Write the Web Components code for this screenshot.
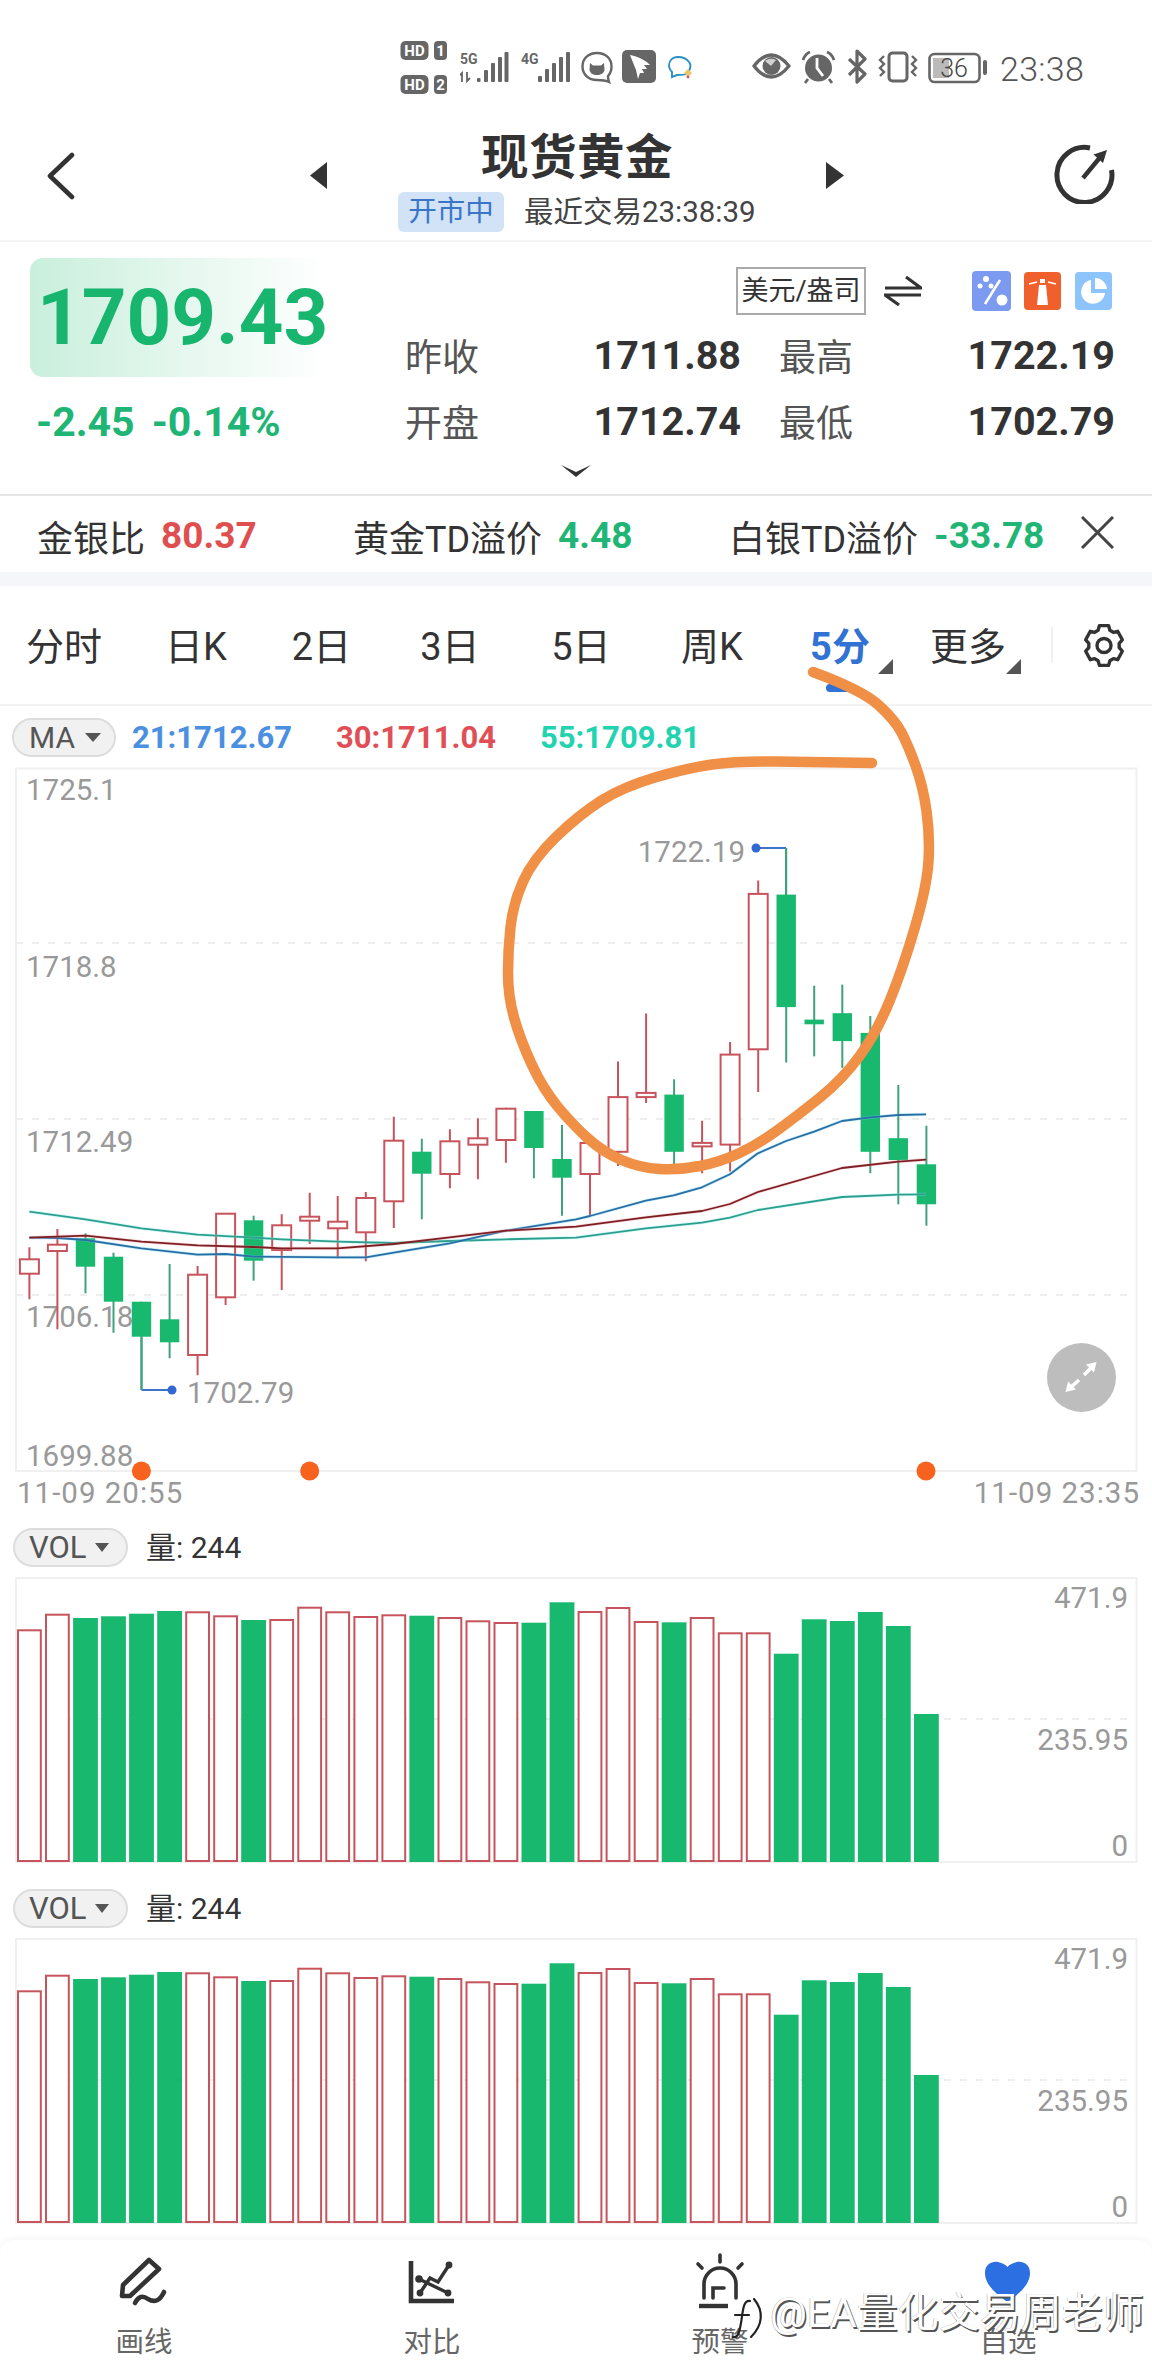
<!DOCTYPE html>
<html lang="zh">
<head>
<meta charset="utf-8">
<title>现货黄金</title>
<style>
html,body{margin:0;padding:0;background:#fff;}
body{width:1152px;height:2376px;position:relative;overflow:hidden;font-family:Roboto,"Noto Sans CJK SC",sans-serif;color:#333;}
</style>
</head>
<body>
<status-bar></status-bar>
<quote-header></quote-header>
<quote-panel></quote-panel>
<ticker-row></ticker-row>
<period-tabs></period-tabs>
<kline-chart></kline-chart>
<vol-chart></vol-chart>
<vol-chart></vol-chart>
<bottom-nav>
  <nav-item label="画线">
    <svg slot="icon" width="80" height="74" viewBox="104 2252 80 74" fill="none" stroke="#333" stroke-width="4.6" stroke-linejoin="round" stroke-linecap="round">
      <path d="M149 2260L159 2269L130 2296L122 2296L123 2285Z"/>
      <path d="M135 2303Q140 2293 148 2299Q158 2305 164 2292"/>
    </svg>
  </nav-item>
  <nav-item label="对比">
    <svg slot="icon" width="80" height="74" viewBox="392 2252 80 74" fill="none" stroke="#333" stroke-width="3.4" stroke-linecap="round">
      <path d="M411 2261V2301H454" stroke-width="4.6" stroke-linecap="butt"/>
      <path d="M420 2293L430 2278L438 2282L449 2265M419 2279L448 2293"/>
      <g fill="#333" stroke="none"><circle cx="420" cy="2293" r="3.4"/><circle cx="449" cy="2265" r="3.4"/><circle cx="419" cy="2279" r="3.8"/><circle cx="448" cy="2293" r="3.4"/></g>
    </svg>
  </nav-item>
  <nav-item label="预警">
    <svg slot="icon" width="80" height="74" viewBox="680 2252 80 74" fill="none" stroke="#333" stroke-width="3.6" stroke-linecap="round">
      <path d="M720 2255V2262M698 2264L702 2268M742 2264L738 2268"/>
      <path d="M704 2298V2284A16 16 0 0 1 736 2284V2298"/>
      <path d="M713 2298V2288H724"/>
      <path d="M699 2306H728" stroke-width="4.4" stroke-linecap="butt"/>
    </svg>
  </nav-item>
  <nav-item label="自选">
    <svg slot="icon" width="80" height="74" viewBox="968 2252 80 74">
      <path fill="#2b6fe3" d="M1007.5 2302C990 2290 985 2281 985 2273C985 2264 992 2261 998 2262C1003 2263 1006 2265 1007.5 2267C1009 2265 1012 2263 1017 2262C1023 2261 1030 2264 1030 2273C1030 2281 1025 2290 1007.5 2302Z"/>
    </svg>
  </nav-item>
</bottom-nav>
<ink-scribble></ink-scribble>

<script>
class StatusBar extends HTMLElement{
    constructor(){
        super();
        this.attachShadow({mode:'open'})
        this.shadowRoot.innerHTML=`
        <style>
        :host{display:flex;height:105px;box-sizing:border-box;padding:40px 0 5px 400px;align-items:center;color:#666;}
        svg{display:block;height:60px;flex:none;}
        text{font-family:Roboto,sans-serif;}
        .time{font-size:34px;font-weight:300;color:#555;margin:-2px 0 0 13px;line-height:60px;letter-spacing:.3px;}
        </style>
        <svg width="47" viewBox="400 40 47 60">
          <g fill="#666"><rect x="400.5" y="41" width="28" height="19" rx="5"/><rect x="434" y="41" width="13" height="19" rx="4"/><rect x="400.5" y="75" width="28" height="19" rx="5"/><rect x="434" y="75" width="13" height="19" rx="4"/></g>
          <g fill="#fff" font-size="15" font-weight="700" text-anchor="middle"><text x="414.5" y="56">HD</text><text x="440.5" y="56">1</text><text x="414.5" y="90">HD</text><text x="440.5" y="90">2</text></g>
        </svg>
        <svg width="50" viewBox="460 40 50 60" style="margin-left:13px">
          <text x="460" y="64" font-size="14" font-weight="700" fill="#666">5G</text>
          <path d="M462 82V73L459 76M467 72V81L470 78" fill="none" stroke="#666" stroke-width="1.8"/>
          <g fill="#666"><rect x="477" y="78" width="3.5" height="4" rx="1"/><rect x="484" y="70" width="4" height="12" rx="1"/><rect x="491" y="63" width="4" height="19" rx="1"/><rect x="498" y="57" width="4" height="25" rx="1"/><rect x="504.5" y="52" width="4" height="30" rx="1"/></g>
        </svg>
        <svg width="49" viewBox="521 40 49 60" style="margin-left:11px">
          <text x="521" y="64" font-size="14" font-weight="700" fill="#666">4G</text>
          <g fill="#666"><rect x="538" y="76" width="4" height="6" rx="1"/><rect x="545" y="69" width="4" height="13" rx="1"/><rect x="552" y="63" width="4" height="19" rx="1"/><rect x="559" y="57" width="4" height="25" rx="1"/><rect x="566" y="52" width="4" height="30" rx="1"/></g>
        </svg>
        <svg width="32" viewBox="581 40 32 60" style="margin-left:11px">
          <path d="M597 53C588 53 582.500 59 582.500 66.500C582.500 74 588 80 597 80C601 80 605 80 609 82C608 79 608 77 608 76C610.500 73.500 611.500 70 611.500 66.500C611.500 59 606 53 597 53Z" fill="none" stroke="#666" stroke-width="2.4"/>
          <path d="M590 63L593 65.500H601L604 63L604.500 70C604 73 601 75 597 75C593 75 590 73 589.500 70Z" fill="#666"/>
        </svg>
        <svg width="34" viewBox="622 40 34 60" style="margin-left:9px">
          <rect x="622" y="50" width="34" height="33" rx="5" fill="#666"/>
          <path d="M630 55C636 56 646 60 650 65L644 65L647 69L642 69L644 73L640 73L638 79L636 70C634 65 632 60 630 55Z" fill="#fff"/>
        </svg>
        <svg width="27" viewBox="668 40 27 60" style="margin-left:12px">
          <path d="M688 72C691 69 691 64 689 62C686 58 682 57 678 57C672 57 669 61 669 66C669 69 671 71 672 72L672 77L677 75C681 75 684 75 686 74" fill="none" stroke="#2a8fc4" stroke-width="1.9"/>
          <path d="M688 69L692 73L688 77L684 73Z" fill="#e9c46a"/><circle cx="688" cy="77" r="1.400" fill="#d9534f"/>
        </svg>
        <svg width="39" viewBox="752 40 39 60" style="margin-left:57px">
          <path d="M754 66Q771 44 789 66Q771 88 754 66Z" fill="none" stroke="#666" stroke-width="3.4" stroke-linejoin="round"/>
          <circle cx="771.500" cy="66" r="9" fill="#666"/><path d="M765 61Q770 57 776 60L771 66Z" fill="#fff" opacity=".7"/>
        </svg>
        <svg width="33" viewBox="802 40 33 60" style="margin-left:11px">
          <circle cx="818.500" cy="68" r="13.500" fill="#666"/>
          <path d="M817 58V68L823 76" fill="none" stroke="#fff" stroke-width="2.800"/>
          <path d="M803 60Q805 54 810 52M834 60Q832 54 827 52M808 79L805 83M829 79L832 83" fill="none" stroke="#666" stroke-width="2.800"/>
        </svg>
        <svg width="20" viewBox="847 40 20 60" style="margin-left:12px">
          <path d="M849 59L865 74L857 82V51L865 59L849 75" fill="none" stroke="#666" stroke-width="3.200" stroke-linejoin="round"/>
        </svg>
        <svg width="40" viewBox="878 40 40 60" style="margin-left:11px">
          <rect x="889" y="53" width="18" height="28" rx="3.500" fill="none" stroke="#666" stroke-width="3"/>
          <path d="M884 56L880 60L884 64L880 68L884 72L880 76M912 56L916 60L912 64L916 68L912 72L916 76" fill="none" stroke="#666" stroke-width="2.400"/>
        </svg>
        <svg width="59" viewBox="928 40 59 60" style="margin-left:10px">
          <rect x="929.500" y="54" width="50" height="28" rx="5" fill="none" stroke="#666" stroke-width="2.600"/>
          <rect x="933" y="58" width="16" height="20" fill="#bbb"/>
          <text x="954" y="77" font-size="25" font-weight="300" fill="#444" text-anchor="middle">36</text>
          <rect x="983" y="60" width="4" height="15" rx="2" fill="#666"/>
        </svg>
        <span class="time">23:38</span>
        `
    }
}
customElements.define('status-bar',StatusBar);

class QuoteHeader extends HTMLElement{
    constructor(){
        super();
        this.attachShadow({mode:'open'})
        this.shadowRoot.innerHTML=`
        <style>
        :host{display:grid;grid-template-columns:310px 534px 1fr;height:137px;box-sizing:border-box;border-bottom:2px solid #f4f4f4;}
        .back{padding:47px 0 0 44px;}
        .mid{display:flex;justify-content:space-between;align-items:flex-start;}
        .tri{margin-top:57px;display:block;}
        .center{display:flex;flex-direction:column;align-items:center;}
        h1{margin:23px 0 0;font-size:47.500px;line-height:60px;font-weight:700;color:#333;letter-spacing:.5px;}
        .sub{display:flex;align-items:center;gap:20px;margin-top:4px;}
        .tag{background:#d2e2f7;color:#3a76c6;font-size:28.500px;line-height:40px;padding:0 10px;border-radius:6px;white-space:nowrap;}
        .time{font-size:29.500px;color:#444;line-height:40px;white-space:nowrap;}
        .share{padding:35px 0 0 207px;margin-left:1px;}
        svg{display:block;}
        </style>
        <div class="back">
          <svg width="36" height="54" viewBox="44 152 36 54" fill="none" stroke="#333" stroke-width="4.600" stroke-linecap="round" stroke-linejoin="round"><path d="M72 155L50 176L72 197"/></svg>
        </div>
        <div class="mid">
          <svg class="tri" width="18" height="27"><path d="M0 13.500L17 0V27Z" fill="#333"/></svg>
          <div class="center">
            <h1>现货黄金</h1>
            <div class="sub"><span class="tag">开市中</span><span class="time">最近交易23:38:39</span></div>
          </div>
          <svg class="tri" width="18" height="27"><path d="M18 13.500L0 0V27Z" fill="#333"/></svg>
        </div>
        <div class="share">
          <svg width="64" height="64" viewBox="1054 140 64 64" fill="none" stroke="#333" stroke-width="5"><path d="M1092 148A27.500 27.500 0 1 0 1113.500 170"/><path d="M1085 178L1104 155" stroke-width="4.400"/><path d="M1109 150L1095.500 154.500L1105 163Z" fill="#333" stroke="none"/></svg>
        </div>
        `
    }
}
customElements.define('quote-header',QuoteHeader);

class StatCell extends HTMLElement{
    constructor(){
        super();
        this.attachShadow({mode:'open'})
        this.shadowRoot.innerHTML=`
        <style>
        :host{display:flex;justify-content:space-between;align-items:center;height:66px;}
        .l{font-size:37px;color:#555;margin-left:-1px;}
        .v{font-size:39.500px;font-weight:700;color:#333;}
        </style>
        <span class="l">${this.getAttribute('label')}</span><span class="v">${this.getAttribute('value')}</span>
        `
    }
}
customElements.define('stat-cell',StatCell);

class QuotePanel extends HTMLElement{
    constructor(){
        super();
        this.attachShadow({mode:'open'})
        this.shadowRoot.innerHTML=`
        <style>
        :host{display:block;height:254px;box-sizing:border-box;border-bottom:2px solid #e6e6e6;}
        .main{display:flex;height:222px;}
        .left{width:297px;margin:16px 79px 0 30px;flex:none;}
        .price{height:119px;border-radius:13px;background:linear-gradient(90deg,#c9efdc,#fff);box-sizing:border-box;padding-left:7px;font-size:78px;font-weight:700;line-height:119px;color:#18b56e;white-space:nowrap;}
        .chg{display:flex;gap:17px;margin:24px 0 0 6px;font-size:41px;line-height:42px;font-weight:700;color:#20b575;}
        .right{width:709px;padding-top:25px;}
        .top{display:flex;align-items:center;height:48px;}
        .unit{width:130px;height:48px;box-sizing:border-box;border:2px solid #aaa;font-size:27px;line-height:44px;text-align:center;margin-left:330px;white-space:nowrap;}
        .stats{display:grid;grid-template-columns:335px 335px;column-gap:39px;margin-top:7px;}
        svg{display:block;flex:none;}
        .chev{display:flex;justify-content:center;}
        </style>
        <div class="main">
          <div class="left">
            <div class="price">1709.43</div>
            <div class="chg"><span>-2.45</span><span>-0.14%</span></div>
          </div>
          <div class="right">
            <div class="top">
              <span class="unit">美元/盎司</span>
              <svg width="38" height="32" viewBox="884 275 38 32" style="margin-left:18px" fill="none" stroke="#333" stroke-width="3.200"><path d="M885 288H921L906 277M921 295H885L899 305"/></svg>
              <svg width="39" height="40" viewBox="0 0 39 40" style="margin-left:50px"><rect width="39" height="40" rx="4" fill="#7b9af0"/><g fill="#fff"><circle cx="30" cy="29" r="5.500"/><circle cx="14" cy="8" r="3"/><circle cx="8" cy="15" r="2.500"/><circle cx="19" cy="15" r="2.500"/></g><path d="M28 9L13 33" stroke="#fff" stroke-width="2.600"/></svg>
              <svg width="37" height="38" viewBox="0 0 37 38" style="margin-left:13px"><rect width="37" height="38" rx="4" fill="#f0602c"/><path d="M15 13H22L24 33H13Z M16 7H21V11H16Z" fill="#fff"/><path d="M5 12L13 10M32 12L24 10" stroke="#fff" stroke-width="1.800"/></svg>
              <svg width="37" height="38" viewBox="0 0 37 38" style="margin-left:14px"><rect width="37" height="38" rx="4" fill="#8cc4fb"/><path d="M16 8A12 12 0 1 0 30 21H16Z" fill="#fff"/><path d="M20 6A12 12 0 0 1 32 17H20Z" fill="#fff"/></svg>
            </div>
            <div class="stats">
              <stat-cell label="昨收" value="1711.88"></stat-cell>
              <stat-cell label="最高" value="1722.19"></stat-cell>
              <stat-cell label="开盘" value="1712.74"></stat-cell>
              <stat-cell label="最低" value="1702.79"></stat-cell>
            </div>
          </div>
        </div>
        <div class="chev"><svg width="32" height="14" viewBox="0 0 32 14"><path d="M1 1L16 8L31 1L16 13Z" fill="#333"/></svg></div>
        `
    }
}
customElements.define('quote-panel',QuotePanel);

class TickerRow extends HTMLElement{
    constructor(){
        super();
        this.attachShadow({mode:'open'})
        this.shadowRoot.innerHTML=`
        <style>
        :host{display:block;height:90px;border-bottom:14px solid #f5f6fa;box-sizing:border-box;}
        .row{display:grid;grid-template-columns:316px 376px 352px 33px;height:76px;box-sizing:border-box;align-items:center;padding:3px 0 0 37px;font-size:36px;color:#333;}
        .i{display:flex;gap:16px;align-items:center;white-space:nowrap;}
        b{font-size:37px;font-weight:700;color:#20b575;}
        b.r{color:#e04f4f;}
        svg{display:block;margin-top:-6px;}
        </style>
        <div class="row">
          <div class="i">金银比<b class="r">80.37</b></div>
          <div class="i">黄金TD溢价<b>4.48</b></div>
          <div class="i">白银TD溢价<b>-33.78</b></div>
          <svg width="33" height="33" viewBox="0 0 33 33" stroke="#444" stroke-width="3"><path d="M1 1L32 32M32 1L1 32"/></svg>
        </div>
        `
    }
}
customElements.define('ticker-row',TickerRow);

class PeriodTabs extends HTMLElement{
    constructor(){
        super();
        this.attachShadow({mode:'open'})
        let pts=[];
        for(let i=0;i<6;i++){
            let a=(i*60-90)*Math.PI/180;
            let d=14*Math.PI/180, e=19*Math.PI/180;
            const p=(r,t)=>(21+r*Math.cos(t)*0.93).toFixed(1)+' '+(22.5+r*Math.sin(t)).toFixed(1);
            pts.push(p(16.5,a-e-.06),p(20.5,a-d),p(20.5,a+d),p(16.5,a+e+.06));
        }
        this.shadowRoot.innerHTML=`
        <style>
        :host{display:grid;grid-template-columns:128px 136px 115px 142px 120px 142px 114px 142px 1fr;height:120px;align-items:center;box-sizing:border-box;border-bottom:2px solid #f3f3f3;font-size:38px;color:#333;}
        .t{text-align:center;position:relative;line-height:50px;margin-top:4px;white-space:nowrap;}
        .on{color:#3172d4;font-weight:700;}
        .t i{position:absolute;left:calc(50% + 38px);top:37px;width:0;height:0;border-left:15px solid transparent;border-bottom:15px solid #555;}
        .on::after{content:"";position:absolute;left:calc(50% - 14px);top:62px;width:28px;height:8px;border-radius:4px;background:#3172d4;}
        .g{display:flex;align-items:center;height:36px;border-left:2px solid #f0f0f0;margin-left:12px;padding-left:30px;}
        svg{display:block;}
        </style>
        <div class="t">分时</div><div class="t">日K</div><div class="t">2日</div><div class="t">3日</div><div class="t">5日</div><div class="t">周K</div>
        <div class="t on">5分<i></i></div><div class="t">更多<i></i></div>
        <div class="g"><svg width="42" height="45" viewBox="0 0 42 45" fill="none" stroke="#333" stroke-width="3.400" stroke-linejoin="round"><path d="M${pts.join('L')}Z"/><circle cx="21" cy="22.500" r="7"/></svg></div>
        `
    }
}
customElements.define('period-tabs',PeriodTabs);

const GREEN='#18b86f', HOLLOW='#c7545c';
const candles=[
['h',1247.3,1259.3,1273.7,1299.3],['h',1229,1244.7,1251,1329.3],['g',1233.3,1238.3,1266.7,1293.3],['g',1252.7,1256.7,1301.7,1332.7],
['g',1301.7,1301.7,1336.7,1390],['g',1264,1319.3,1342.3,1358.3],['h',1266,1274.7,1355,1375.3],['h',1213.7,1213.7,1297.3,1305],
['g',1215.7,1220.3,1260.7,1280.7],['h',1214.3,1225.3,1250,1290],['h',1192.7,1216.7,1220.7,1244],['h',1196,1221.7,1228.3,1258.3],
['h',1192,1198,1232.3,1261.3],['h',1116.7,1140.7,1201.3,1228],['g',1138.7,1151.7,1173.7,1219.3],['h',1129.3,1141.3,1174,1188.3],
['h',1118.3,1138.3,1144.7,1179.3],['h',1107.7,1108.7,1140,1162.7],['g',1111,1111,1148,1178.3],['g',1125,1159,1177.7,1215.7],
['h',1135,1143,1174,1216],['h',1061.4,1097.1,1151.8,1166],['h',1013.6,1092.9,1097.1,1102.9],['g',1079.3,1094.6,1151.8,1173.2],
['h',1120.7,1142.9,1146.4,1173.2],['h',1042.1,1054.6,1144.6,1171.4],['h',880.4,893.9,1049.3,1092.1],['g',848.2,894.6,1007.1,1062.5],
['g',985.7,1019.6,1024.3,1056.4],['g',984.6,1013.2,1041.1,1067.9],['g',1016,1032.9,1151.8,1173.2],['g',1085,1138.2,1160,1204.3],['g',1125.7,1164.3,1204.3,1225.7]
];
const cx=i=>29.4+i*28.03;
// traced from the left and right halves of the chart
const L=a=>a.map(p=>(p[0]/2.722).toFixed(1)+','+(1060+p[1]/3).toFixed(1));
const R=a=>a.map(p=>(576+p[0]/2.722).toFixed(1)+','+(1060+p[1]/3).toFixed(1));
const maTeal=L([[80,455],[233,478],[385,505],[538,524],[691,533],[767,538],[919,545],[1072,549],[1224,543],[1377,538]]).concat(R([[0,533],[190,505],[343,488],[419,473],[495,450],[724,411],[877,404],[953,403]]));
const maRed=L([[80,533],[233,527],[385,545],[538,556],[691,561],[767,565],[919,565],[1072,552],[1224,532],[1377,512]]).concat(R([[0,500],[190,472],[343,453],[419,432],[495,396],[724,324],[877,305],[953,299]]));
const maBlue=L([[80,533],[157,534],[233,540],[385,565],[538,584],[614,582],[691,590],[919,592],[996,592],[1072,578],[1224,550],[1377,512],[1530,485]]).concat(R([[0,478],[38,468],[190,422],[266,406],[343,382],[419,343],[495,280],[572,243],[648,215],[724,183],[801,172],[877,165],[953,163]]));

class KlineChart extends HTMLElement{
    constructor(){
        super();
        this.attachShadow({mode:'open'})
        let c='';
        candles.forEach((d,i)=>{
            let x=cx(i).toFixed(1);
            if(d[0]=='g'){
                c+=`<path d="M${x} ${d[1]}V${d[4]}" stroke="#3fa27c" stroke-width="2"/><rect x="${(cx(i)-9.7).toFixed(1)}" y="${d[2]}" width="19.4" height="${(d[3]-d[2]).toFixed(1)}" fill="${GREEN}"/>`;
            }else{
                c+=`<path d="M${x} ${d[1]}V${d[2]}M${x} ${d[3]}V${d[4]}" stroke="${HOLLOW}" stroke-width="2"/><rect x="${(cx(i)-9.5).toFixed(1)}" y="${d[2]}" width="19" height="${(d[3]-d[2]).toFixed(1)}" fill="#fff" stroke="${HOLLOW}" stroke-width="2"/>`;
            }
        });
        const line=(p,col,edge)=>`<polyline points="${p.join(' ')}" fill="none" stroke="${edge}" stroke-width="3.200" stroke-linejoin="round" opacity=".4"/><polyline points="${p.join(' ')}" fill="none" stroke="${col}" stroke-width="1.800" stroke-linejoin="round"/>`;
        this.shadowRoot.innerHTML=`
        <style>
        :host{display:block;height:804px;}
        .ma{display:flex;height:56px;box-sizing:border-box;padding:12px 0 0 12px;align-items:flex-start;font-size:31px;font-weight:700;}
        .pill{width:104px;height:39px;box-sizing:border-box;border:2px solid #ddd;border-radius:20px;background:#f1f1f1;display:flex;align-items:center;padding-left:15px;gap:10px;font-weight:400;color:#555;font-size:30px;margin-right:16px;flex:none;}
        .pill i{width:0;height:0;border:8px solid transparent;border-top:9px solid #555;border-bottom:0;}
        .ma span.v{width:204px;line-height:39px;flex:none;white-space:nowrap;}
        svg{display:block;}
        text{font-family:Roboto,sans-serif;font-size:29.500px;fill:#999;}
        </style>
        <div class="ma">
          <div class="pill">MA<i></i></div>
          <span class="v" style="color:#4a8fe0">21:1712.67</span>
          <span class="v" style="color:#e04f56">30:1711.04</span>
          <span class="v" style="color:#22d3b0">55:1709.81</span>
        </div>
        <svg width="1152" height="748" viewBox="0 762 1152 748">
          <path d="M16 768.500H1136.500V1471H16Z" fill="none" stroke="#f0f0f0" stroke-width="2"/>
          <path d="M16 943H1136M16 1119H1136M16 1295H1136" stroke="#eee" stroke-width="2" stroke-dasharray="7 9" fill="none"/>
          <text x="26" y="800">1725.1</text><text x="26" y="977">1718.8</text><text x="26" y="1152">1712.49</text><text x="26" y="1327">1706.18</text><text x="26" y="1466">1699.88</text>
          <text x="17" y="1503" letter-spacing="1">11-09 20:55</text><text x="1140" y="1503" text-anchor="end" letter-spacing="1">11-09 23:35</text>
          ${c}
          ${line(maTeal,'#2f9e8f','#7ff0e6')}
          ${line(maBlue,'#2b6ea6','#6fd8f0')}
          ${line(maRed,'#7d1f25','#f0a0a0')}
          <path d="M786 848H756M141.500 1390H172" stroke="#3b74c9" stroke-width="2" fill="none"/>
          <path d="M786 848V895M141.500 1337V1390" stroke="#3fa27c" stroke-width="2" fill="none"/>
          <circle cx="756" cy="848" r="4.500" fill="#3168d4"/><circle cx="172" cy="1390" r="4.500" fill="#3168d4"/>
          <text x="745" y="862" text-anchor="end">1722.19</text><text x="187" y="1403">1702.79</text>
          <g fill="#f7631e"><circle cx="141.400" cy="1471" r="9.500"/><circle cx="309.700" cy="1471" r="9.500"/><circle cx="926" cy="1471" r="9.500"/></g>
          <circle cx="1081.500" cy="1377.500" r="34.500" fill="#bdbdbd"/>
          <path d="M1084 1375L1093 1366M1079 1380L1070 1388" stroke="#fff" stroke-width="3.500"/>
          <path d="M1096.500 1362L1086 1364.500L1094 1372.500ZM1065.500 1392L1076 1389.500L1068 1381.500Z" fill="#fff"/>
        </svg>
        `
    }
}
customElements.define('kline-chart',KlineChart);

const vols=[[448,'h'],[401,'h'],[414,'g'],[409,'g'],[401,'g'],[393,'g'],[394,'h'],[406,'h'],[420,'g'],[417,'h'],[380,'h'],[394,'h'],[408,'h'],[403,'h'],[407,'g'],[411,'h'],[421,'h'],[426,'h'],[428,'g'],[367,'g'],[393,'h'],[381,'h'],[423,'h'],[427,'g'],[411,'h'],[457,'h'],[457,'h'],[521,'g'],[418,'g'],[423,'g'],[396,'g'],[438,'g'],[702,'g']];

class VolChart extends HTMLElement{
    constructor(){
        super();
        this.attachShadow({mode:'open'})
        let b='';
        vols.forEach((v,i)=>{
            let top=1480+v[0]/3, x=cx(i)-12.4;
            if(v[1]=='g') b+=`<rect x="${x.toFixed(1)}" y="${top.toFixed(1)}" width="24.8" height="${(1862-top).toFixed(1)}" fill="${GREEN}"/>`;
            else b+=`<rect x="${(x+1).toFixed(1)}" y="${(top+1).toFixed(1)}" width="22.8" height="${(1860-top).toFixed(1)}" fill="#fff" stroke="${HOLLOW}" stroke-width="2"/>`;
        });
        this.shadowRoot.innerHTML=`
        <style>
        :host{display:block;height:360.500px;}
        .head{display:flex;height:60px;box-sizing:border-box;padding:18px 0 0 13px;align-items:flex-start;}
        .pill{width:115px;height:39px;box-sizing:border-box;border:2px solid #ddd;border-radius:20px;background:#f1f1f1;display:flex;align-items:center;padding-left:14px;gap:8px;color:#555;font-size:31px;flex:none;}
        .pill i{width:0;height:0;border:7px solid transparent;border-top:9px solid #555;border-bottom:0;}
        .q{margin-left:18px;font-size:30px;line-height:39px;color:#333;}
        svg{display:block;}
        text{font-family:Roboto,sans-serif;font-size:29.500px;fill:#999;}
        </style>
        <div class="head"><div class="pill">VOL<i></i></div><span class="q">量: 244</span></div>
        <svg width="1152" height="300" viewBox="0 1570 1152 300">
          <path d="M16 1578H1136.500V1862H16Z" fill="none" stroke="#f0f0f0" stroke-width="2"/>
          <path d="M16 1719H1136" stroke="#eee" stroke-width="2" stroke-dasharray="7 9" fill="none"/>
          <text x="1128" y="1608" text-anchor="end">471.9</text><text x="1128" y="1750" text-anchor="end">235.95</text><text x="1128" y="1856" text-anchor="end">0</text>
          ${b}
        </svg>
        `
    }
}
customElements.define('vol-chart',VolChart);

class NavItem extends HTMLElement{
    constructor(){
        super();
        this.attachShadow({mode:'open'})
        this.shadowRoot.innerHTML=`
        <style>
        :host{display:flex;flex-direction:column;align-items:center;}
        ::slotted(svg){display:block;}
        span{font-size:28.500px;line-height:34px;color:#666;}
        </style>
        <slot name="icon"></slot><span>${this.getAttribute('label')}</span>
        `
    }
}
customElements.define('nav-item',NavItem);

class BottomNav extends HTMLElement{
    constructor(){
        super();
        this.attachShadow({mode:'open'})
        this.shadowRoot.innerHTML=`
        <style>
        :host{display:grid;grid-template-columns:repeat(4,288px);position:absolute;left:0;top:2240px;width:1152px;height:136px;box-sizing:border-box;padding-top:12px;background:#fff;border-radius:14px 14px 0 0;box-shadow:0 -2px 6px rgba(0,0,0,.04);}
        .mark{position:absolute;left:731px;top:47px;display:flex;align-items:center;gap:5px;white-space:nowrap;font-size:41px;line-height:48px;color:#fff;text-shadow:1.500px 1.500px 0 #555,-.5px -.5px 0 #aaa;}
        svg{display:block;margin-top:8px;}
        </style>
        <slot></slot>
        <div class="mark">
          <svg width="34" height="44" viewBox="729 2292 34 44" fill="none" stroke="#222" stroke-width="2.200" stroke-linecap="round"><path d="M748 2298C741 2297 741 2308 739 2320C737 2332 735 2335 731 2334M733 2312H747"/><path d="M752 2296C762 2308 761 2322 749 2334"/></svg>
          <span>@EA量化交易周老师</span>
        </div>
        `
    }
}
customElements.define('bottom-nav',BottomNav);

class InkScribble extends HTMLElement{
    constructor(){
        super();
        this.attachShadow({mode:'open'})
        const p=[[813,672],[862,690],[895,720],[908,745],[923,786],[930,836],[927,886],[903,968],[877,1032],[843,1079],[797,1116],[757,1145],[720,1162],[680,1170],[640,1168],[603,1152],[573,1125],[543,1089],[520,1039],[508,996],[508,950],[513,904],[533,859],[580,814],[623,787],[687,768],[737,761],[813,762],[872,763]];
        let d='M'+p[0].join(' ');
        for(let i=1;i<p.length-1;i++){
            d+=`Q${p[i][0]} ${p[i][1]} ${(p[i][0]+p[i+1][0])/2} ${(p[i][1]+p[i+1][1])/2}`;
        }
        d+='L'+p[p.length-1].join(' ');
        this.shadowRoot.innerHTML=`
        <style>
        :host{display:block;position:absolute;left:0;top:0;width:1152px;height:2376px;pointer-events:none;}
        svg{display:block;}
        </style>
        <svg width="1152" height="2376"><path d="${d}" fill="none" stroke="#f08f46" stroke-width="10.500" stroke-linecap="round" stroke-linejoin="round"/></svg>
        `
    }
}
customElements.define('ink-scribble',InkScribble);
</script>
</body>
</html>
